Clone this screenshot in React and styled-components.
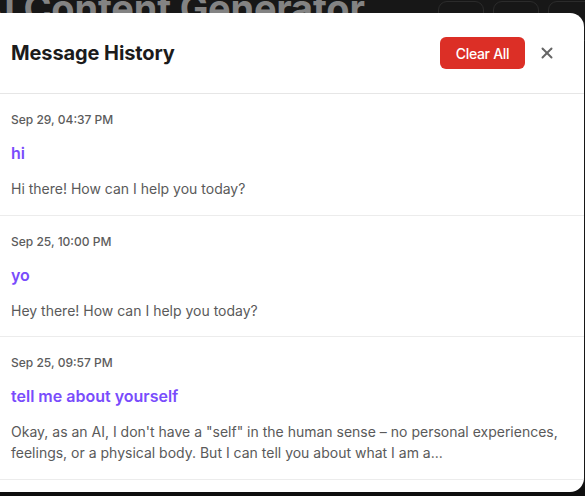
import React from "react";
import styled, { createGlobalStyle } from "styled-components";

const Global = createGlobalStyle`
  html, body { margin: 0; padding: 0; }
  body {
    background: #171717;
    font-family: Inter, "Noto Sans", sans-serif;
    overflow: hidden;
    height: 496px;
  }
`;

const Page = styled.div`
  position: relative;
  width: 585px;
  height: 496px;
  overflow: hidden;
  background: linear-gradient(#171717 0, #171717 480px, #0e0e0e 490px);
`;

const BgHeader = styled.div`
  display: flex;
  align-items: flex-start;
  justify-content: space-between;
  margin: -13px 0 0 -24px;
`;

const BgTitle = styled.h1`
  margin: 0;
  font-size: 38px;
  line-height: 42px;
  font-weight: 700;
  color: #838383;
  letter-spacing: -0.2px;
  white-space: nowrap;
`;

const BgActions = styled.div`
  display: flex;
  gap: 9px;
  margin-top: 14px;
  margin-right: -9px;
`;

const BgButton = styled.div`
  width: 46px;
  height: 40px;
  border: 1px solid #2b2b2b;
  border-radius: 9px;
  box-sizing: border-box;
`;

const Modal = styled.div`
  position: absolute;
  top: 13px;
  left: -13px;
  width: 597px;
  height: 479px;
  background: #ffffff;
  border-radius: 14px;
  overflow: hidden;
  display: flex;
  flex-direction: column;
`;

const Header = styled.div`
  display: flex;
  align-items: center;
  justify-content: space-between;
  padding: 24px 23px 24px 24px;
  border-bottom: 1px solid #e6e6e6;
`;

const Title = styled.h2`
  margin: 0;
  font-size: 20px;
  font-weight: 700;
  color: #1b1b1b;
  letter-spacing: -0.1px;
`;

const Actions = styled.div`
  display: flex;
  align-items: center;
  gap: 8px;
`;

const ClearButton = styled.button`
  width: 85px;
  height: 32px;
  border: none;
  border-radius: 6px;
  background: #dc2f26;
  color: #ffffff;
  font-family: inherit;
  font-size: 14px;
  font-weight: 500;
  letter-spacing: -0.3px;
  cursor: pointer;
`;

const CloseButton = styled.button`
  width: 28px;
  height: 28px;
  border: none;
  background: transparent;
  padding: 0;
  display: flex;
  align-items: center;
  justify-content: center;
  color: #666666;
  cursor: pointer;
`;

const List = styled.div`
  display: flex;
  flex-direction: column;
`;

const Item = styled.div`
  padding: 17px 24px 15.5px;
  border-bottom: 1px solid #ececec;
`;

const Time = styled.div`
  font-size: 12px;
  line-height: 18px;
  font-weight: 500;
  color: #5c5c5c;
`;

const Prompt = styled.div`
  margin-top: 12px;
  font-size: 16px;
  line-height: 24px;
  font-weight: 600;
  color: #794cfc;
`;

const Reply = styled.div`
  margin-top: 13px;
  font-size: 14px;
  line-height: 21px;
  color: #5a5a5a;
`;

const messages = [
  {
    time: "Sep 29, 04:37 PM",
    prompt: "hi",
    reply: "Hi there! How can I help you today?",
  },
  {
    time: "Sep 25, 10:00 PM",
    prompt: "yo",
    reply: "Hey there! How can I help you today?",
  },
  {
    time: "Sep 25, 09:57 PM",
    prompt: "tell me about yourself",
    reply:
      'Okay, as an AI, I don\'t have a "self" in the human sense – no personal experiences, feelings, or a physical body. But I can tell you about what I am a...',
  },
];

const XIcon = () => (
  <svg width="18" height="18" viewBox="0 0 24 24" fill="none" stroke="currentColor" strokeWidth="2.6" strokeLinecap="round">
    <path d="M18 6 6 18" />
    <path d="m6 6 12 12" />
  </svg>
);

export default function App() {
  return (
    <Page>
      <Global />
      <BgHeader>
        <BgTitle>AI Content Generator</BgTitle>
        <BgActions>
          <BgButton />
          <BgButton />
          <BgButton />
        </BgActions>
      </BgHeader>
      <Modal>
        <Header>
          <Title>Message History</Title>
          <Actions>
            <ClearButton>Clear All</ClearButton>
            <CloseButton aria-label="Close">
              <XIcon />
            </CloseButton>
          </Actions>
        </Header>
        <List>
          {messages.map((m) => (
            <Item key={m.time}>
              <Time>{m.time}</Time>
              <Prompt>{m.prompt}</Prompt>
              <Reply>{m.reply}</Reply>
            </Item>
          ))}
        </List>
      </Modal>
    </Page>
  );
}
